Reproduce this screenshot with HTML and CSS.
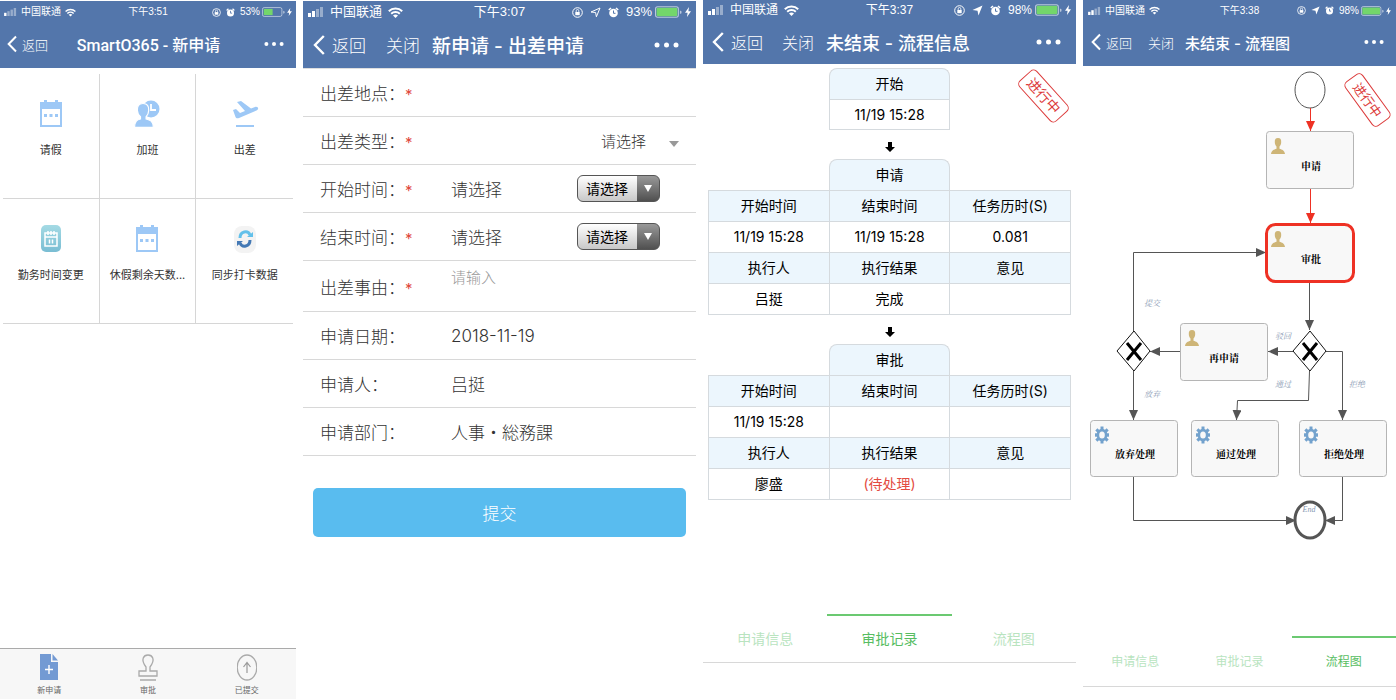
FILE: index.html
```html
<!DOCTYPE html>
<html lang="zh-CN">
<head>
<meta charset="utf-8">
<title>SmartO365</title>
<link rel="stylesheet" href="styles.css">
</head>
<body>
<svg class="sprite" aria-hidden="true">
  <symbol id="signal-1" viewBox="0 0 16 10"><rect x="0" y="6" width="3" height="4"/><g opacity=".4"><rect x="4" y="4" width="3" height="6"/><rect x="8" y="2" width="3" height="8"/><rect x="12" y="0" width="3" height="10"/></g></symbol>
  <symbol id="signal-2" viewBox="0 0 16 10"><rect x="0" y="6" width="3" height="4"/><rect x="4" y="4" width="3" height="6"/><g opacity=".4"><rect x="8" y="2" width="3" height="8"/><rect x="12" y="0" width="3" height="10"/></g></symbol>
  <symbol id="wifi" viewBox="0 0 15 11"><path fill="none" stroke="currentColor" stroke-width="2" d="M.8 4.2a9.6 9.6 0 0 1 13.4 0M3.2 6.8a6.2 6.2 0 0 1 8.6 0"/><path d="M5 8.6a3.6 3.6 0 0 1 5 0L7.500 11z"/></symbol>
  <symbol id="lock" viewBox="0 0 11 11"><circle cx="5.500" cy="5.500" r="4.800" fill="none" stroke="currentColor"/><rect x="3.300" y="5" width="4.400" height="3.200"/><path fill="none" stroke="currentColor" stroke-width=".8" d="M4.200 5V3.800a1.300 1.300 0 0 1 2.600 0V5"/></symbol>
  <symbol id="loc-line" viewBox="0 0 11 11"><path fill="none" stroke="currentColor" d="M10 1L6.400 9.800 5.600 5.500 1 5z"/></symbol>
  <symbol id="loc-fill" viewBox="0 0 11 11"><path d="M10.500.5L6.500 10.500 5.500 5.700.5 5z"/></symbol>
  <symbol id="alarm" viewBox="0 0 11 11"><circle cx="5.500" cy="6" r="4.300"/><path fill="none" stroke="currentColor" stroke-width="1.600" d="M.8 3L3 1M10.200 3L8 1"/><path class="cut" d="M5.500 3.500V6.300H7.500"/></symbol>
  <symbol id="bat-half" viewBox="0 0 26 11"><rect x=".5" y=".5" width="22" height="10" rx="2" fill="none" stroke="currentColor" opacity=".6"/><rect x="2" y="2" width="10" height="7" fill="#73d66b"/><path d="M24 4v3.500l1.500-.8V4.800z" opacity=".6"/></symbol>
  <symbol id="bat-full" viewBox="0 0 26 11"><rect x=".5" y=".5" width="22" height="10" rx="2" fill="none" stroke="currentColor" opacity=".6"/><rect x="1.500" y="1.500" width="20" height="8" rx="1" fill="#73d66b"/><path d="M24 4v3.500l1.500-.8V4.800z" opacity=".6"/></symbol>
  <symbol id="bolt" viewBox="0 0 6 10"><path d="M4 0L0 5.800H2.600L2 10 6 4.200H3.400z"/></symbol>
  <symbol id="back" viewBox="0 0 12 20"><path fill="none" stroke="currentColor" stroke-width="2.400" d="M10.800 1L2 10l8.800 9"/></symbol>
  <symbol id="dots" viewBox="0 0 25 6"><circle cx="3" cy="3" r="2.500"/><circle cx="12.500" cy="3" r="2.500"/><circle cx="22" cy="3" r="2.500"/></symbol>
  <symbol id="calendar" viewBox="0 0 24 28"><path fill-rule="evenodd" d="M1 2h4V0h3v2h8V0h3v2h4v25H1zM3 9v16h18V9z"/><rect x="5" y="14" width="3" height="3"/><rect x="10.500" y="14" width="3" height="3"/><rect x="16" y="14" width="3" height="3"/></symbol>
  <symbol id="person" viewBox="0 0 14 16"><path d="M7 0c2.400 0 3.400 1.600 3.200 4.200-.1 2-.8 3.400-1.700 4.300v2.300c2.500.8 5 1.700 5.500 5.200H0c.5-3.500 3-4.400 5.500-5.200V8.500C4.600 7.600 3.900 6.200 3.800 4.200 3.600 1.600 4.600 0 7 0z"/></symbol>
  <symbol id="gear" viewBox="-8 -9 16 18"><g><rect x="-1.500" y="-8.500" width="3" height="17"/><rect x="-7" y="-1.700" width="14" height="3.400"/><rect x="-1.500" y="-8" width="3" height="16" transform="rotate(45)"/><rect x="-1.500" y="-8" width="3" height="16" transform="rotate(-45)"/><ellipse rx="5.300" ry="6.300"/></g><ellipse rx="2.800" ry="3.500" fill="#f8f8f8"/></symbol>
</svg>

<main class="board">
  <section class="screen screen-apps">
    <header class="head">
      <div class="status">
        <div class="status-left"><svg class="i-signal"><use href="#signal-1"/></svg><span>中国联通</span><svg class="i-wifi"><use href="#wifi"/></svg></div>
        <time>下午3:51</time>
        <div class="status-right"><svg class="i-round"><use href="#lock"/></svg><svg class="i-round"><use href="#alarm"/></svg><span>53%</span><svg class="i-bat"><use href="#bat-half"/></svg><svg class="i-bolt"><use href="#bolt"/></svg></div>
      </div>
      <nav class="nav nav-centered">
        <button class="back" type="button"><svg class="i-back"><use href="#back"/></svg>返回</button>
        <h1>SmartO365 - 新申请</h1>
        <button class="more" type="button" aria-label="更多"><svg class="i-dots"><use href="#dots"/></svg></button>
      </nav>
    </header>
    <div class="apps">
      <a class="app" href="#leave"><svg class="app-icon"><use href="#calendar" x="2" width="24" height="28"/></svg>请假</a>
      <a class="app" href="#overtime"><svg class="app-icon" viewBox="0 0 28 28"><circle cx="18" cy="9" r="8.500"/><path fill="none" stroke="#fff" stroke-width="1.800" d="M18 4v6h5"/><path stroke="#fff" stroke-width="1.200" d="M10 3.500c4.300 0 6 2.600 5.700 7-.2 3-1.200 5-2.600 6.300v2.200c4 .9 7 2 7.300 8.400H1.500c.3-6.400 2.500-7.500 6-8.400v-2.200C5.800 15.500 4.600 13.500 4.400 10.500 4.100 6.100 5.700 3.500 10 3.500z"/></svg>加班</a>
      <a class="app" href="#trip"><svg class="app-icon" viewBox="0 0 28 28"><path d="M2 10l3-1 4 4 5-2L6 2l4-1 10 7.500 4-1.500c3-1 4.500 2 1.500 3.500L8 18c-2 .8-3 0-3.500-1z"/><rect x="5" y="25" width="18" height="2"/></svg>出差</a>
      <a class="app" href="#shift"><svg class="app-icon" viewBox="0 0 28 28"><defs><linearGradient id="teal" x2="0" y2="1"><stop stop-color="#a4dae4"/><stop offset="1" stop-color="#79bdd3"/></linearGradient></defs><rect x="4" y="0" width="20" height="27" rx="5" fill="url(#teal)"/><path fill="none" stroke="#fff" stroke-width="1.500" d="M8 8h12v13H8zM8 12h12M11 6v4M14 6v4M17 6v4M12.500 14.500v4M15.500 14.500v4"/></svg>勤务时间变更</a>
      <a class="app" href="#balance"><svg class="app-icon"><use href="#calendar" x="2" width="24" height="28"/></svg>休假剩余天数...</a>
      <a class="app" href="#sync"><svg class="app-icon" viewBox="0 0 28 28"><rect x="3" y="1" width="22" height="27" rx="8" fill="#f3f3f3"/><path fill="none" stroke="#62c0ea" stroke-width="3" d="M9 13c0-7 8-8 10-3"/><path fill="#62c0ea" d="M16 12h6V7z"/><path fill="none" stroke="#4479b5" stroke-width="3" d="M19 15c0 7-8 8-10 3"/><path fill="#4479b5" d="M12 16H6v5z"/></svg>同步打卡数据</a>
    </div>
    <nav class="dock">
      <a href="#new"><svg class="dock-icon" viewBox="0 0 20 28"><path fill="#739ad3" d="M1 1h11v8h7v18H1z"/><path fill="#739ad3" d="M13.500 1L19 7.500h-5.500z"/><path stroke="#fff" stroke-width="1.400" d="M10 12v9M6 16.500h8"/></svg>新申请</a>
      <a href="#approve"><svg class="dock-icon" viewBox="0 0 20 28"><path fill="none" stroke="#aaa" stroke-width="1.300" d="M8 18v-4C2 6 6 2 10 2s8 4 2 12v4h7v5H1v-5zM2 27h16"/></svg>审批</a>
      <a href="#sent"><svg class="dock-icon" viewBox="0 0 20 28"><ellipse cx="10" cy="14.500" rx="9.800" ry="12.500" fill="none" stroke="#aaa" stroke-width="1.300"/><path fill="none" stroke="#999" stroke-width="1.200" d="M10 20V9.500M6.500 14L10 9.500l3.500 4.500"/></svg>已提交</a>
    </nav>
  </section>

  <section class="screen screen-form">
    <header class="head">
      <div class="status">
        <div class="status-left"><svg class="i-signal"><use href="#signal-2"/></svg><span>中国联通</span><svg class="i-wifi"><use href="#wifi"/></svg></div>
        <time>下午3:07</time>
        <div class="status-right"><svg class="i-round"><use href="#lock"/></svg><svg class="i-round"><use href="#loc-line"/></svg><svg class="i-round"><use href="#alarm"/></svg><span>93%</span><svg class="i-bat"><use href="#bat-full"/></svg><svg class="i-bolt"><use href="#bolt"/></svg></div>
      </div>
      <nav class="nav">
        <button class="back" type="button"><svg class="i-back"><use href="#back"/></svg>返回</button>
        <button class="close" type="button">关闭</button>
        <h1>新申请 - 出差申请</h1>
        <button class="more" type="button" aria-label="更多"><svg class="i-dots"><use href="#dots"/></svg></button>
      </nav>
    </header>
    <form class="form">
      <div class="row"><label for="place">出差地点：<b>*</b></label><input id="place" class="text" type="text"></div>
      <div class="row"><label for="kind">出差类型：<b>*</b></label><span class="plain-select"><select id="kind"><option>请选择</option></select></span></div>
      <div class="row"><label for="start">开始时间：<b>*</b></label><span class="value">请选择</span><span class="gloss-select"><select id="start"><option>请选择</option></select></span></div>
      <div class="row"><label for="end">结束时间：<b>*</b></label><span class="value">请选择</span><span class="gloss-select"><select id="end"><option>请选择</option></select></span></div>
      <div class="row row-tall"><label for="reason">出差事由：<b>*</b></label><textarea id="reason" class="text" rows="1" placeholder="请输入"></textarea></div>
      <div class="row"><span class="label">申请日期：</span><span class="value">2018-11-19</span></div>
      <div class="row"><span class="label">申请人：</span><span class="value">吕挺</span></div>
      <div class="row"><span class="label">申请部门：</span><span class="value value-ja" lang="ja">人事・総務課</span></div>
      <button class="submit" type="submit">提交</button>
    </form>
  </section>

  <section class="screen screen-log">
    <header class="head">
      <div class="status">
        <div class="status-left"><svg class="i-signal"><use href="#signal-2"/></svg><span>中国联通</span><svg class="i-wifi"><use href="#wifi"/></svg></div>
        <time>下午3:37</time>
        <div class="status-right"><svg class="i-round"><use href="#lock"/></svg><svg class="i-round"><use href="#loc-fill"/></svg><svg class="i-round"><use href="#alarm"/></svg><span>98%</span><svg class="i-bat"><use href="#bat-full"/></svg><svg class="i-bolt"><use href="#bolt"/></svg></div>
      </div>
      <nav class="nav">
        <button class="back" type="button"><svg class="i-back"><use href="#back"/></svg>返回</button>
        <button class="close" type="button">关闭</button>
        <h1>未结束 - 流程信息</h1>
        <button class="more" type="button" aria-label="更多"><svg class="i-dots"><use href="#dots"/></svg></button>
      </nav>
    </header>
    <div class="log">
      <span class="stamp">进行中</span>
      <h2 class="step">开始</h2>
      <p class="step-time">11/19 15:28</p>
      <svg class="down" viewBox="0 0 10 10"><path d="M3 0h4v5h3l-5 5-5-5h3z"/></svg>
      <h2 class="step">申请</h2>
      <table>
        <tr><th>开始时间</th><th>结束时间</th><th>任务历时(S)</th></tr>
        <tr><td>11/19 15:28</td><td>11/19 15:28</td><td>0.081</td></tr>
        <tr><th>执行人</th><th>执行结果</th><th>意见</th></tr>
        <tr><td>吕挺</td><td>完成</td><td></td></tr>
      </table>
      <svg class="down" viewBox="0 0 10 10"><path d="M3 0h4v5h3l-5 5-5-5h3z"/></svg>
      <h2 class="step">审批</h2>
      <table>
        <tr><th>开始时间</th><th>结束时间</th><th>任务历时(S)</th></tr>
        <tr><td>11/19 15:28</td><td></td><td></td></tr>
        <tr><th>执行人</th><th>执行结果</th><th>意见</th></tr>
        <tr><td>廖盛</td><td class="pending">(待处理)</td><td></td></tr>
      </table>
    </div>
    <nav class="tabs"><a href="#info">申请信息</a><a class="active" href="#log">审批记录</a><a href="#flow">流程图</a></nav>
  </section>

  <section class="screen screen-flow">
    <header class="head">
      <div class="status">
        <div class="status-left"><svg class="i-signal"><use href="#signal-2"/></svg><span>中国联通</span><svg class="i-wifi"><use href="#wifi"/></svg></div>
        <time>下午3:38</time>
        <div class="status-right"><svg class="i-round"><use href="#lock"/></svg><svg class="i-round"><use href="#loc-fill"/></svg><svg class="i-round"><use href="#alarm"/></svg><span>98%</span><svg class="i-bat"><use href="#bat-full"/></svg><svg class="i-bolt"><use href="#bolt"/></svg></div>
      </div>
      <nav class="nav">
        <button class="back" type="button"><svg class="i-back"><use href="#back"/></svg>返回</button>
        <button class="close" type="button">关闭</button>
        <h1>未结束 - 流程图</h1>
        <button class="more" type="button" aria-label="更多"><svg class="i-dots"><use href="#dots"/></svg></button>
      </nav>
    </header>
    <div class="flow">
      <span class="stamp">进行中</span>
      <svg class="diagram" viewBox="0 0 313 480" role="img" aria-label="流程图">
        <defs>
          <marker id="tip" viewBox="0 0 10 9" refX="10" refY="4.500" markerWidth="10" markerHeight="9" markerUnits="userSpaceOnUse" orient="auto"><path d="M0 0l10 4.500-10 4.500z" fill="#555"/></marker>
          <marker id="tip-red" viewBox="0 0 10 9" refX="10" refY="4.500" markerWidth="10" markerHeight="9" markerUnits="userSpaceOnUse" orient="auto"><path d="M0 0l10 4.500-10 4.500z" fill="#ee3124"/></marker>
        </defs>
        <ellipse class="start" cx="227" cy="24" rx="15" ry="18"/>
        <path class="edge edge-red" d="M227.500 42V65"/>
        <path class="edge edge-red" d="M227.500 122V157"/>
        <path class="edge" d="M226.500 217V264"/>
        <path class="edge" d="M211 285.500H185"/>
        <path class="edge" d="M97 285.500H67"/>
        <path class="edge" d="M50.500 266V186.500H183"/>
        <path class="edge" d="M50.500 305V354"/>
        <path class="edge" d="M226.500 305L225.500 334.500H154.500L153.500 354"/>
        <path class="edge" d="M243 285.500H259.500V354"/>
        <path class="edge" d="M50.500 411V454.500H213"/>
        <path class="edge" d="M259.500 411V454.500H242"/>
        <rect class="task" x="183.500" y="65.500" width="87" height="57" rx="3"/>
        <rect class="task task-current" x="183.500" y="158.500" width="87" height="57" rx="9"/>
        <rect class="task" x="97.500" y="257.500" width="87" height="57" rx="3"/>
        <rect class="task" x="7.500" y="354.500" width="87" height="56" rx="3"/>
        <rect class="task" x="108.500" y="354.500" width="87" height="56" rx="3"/>
        <rect class="task" x="216.500" y="354.500" width="87" height="56" rx="3"/>
        <g fill="#ceb577"><use href="#person" x="188" y="72" width="14" height="16"/><use href="#person" x="188" y="165" width="14" height="16"/><use href="#person" x="102" y="264" width="14" height="16"/></g>
        <g fill="#73a2cd"><use href="#gear" x="11" y="360" width="16" height="18"/><use href="#gear" x="112" y="360" width="16" height="18"/><use href="#gear" x="220" y="360" width="16" height="18"/></g>
        <path class="gate" d="M227 265l16 20-16 20-17-20zM51 265l16 20-16 20-17-20z"/>
        <path class="cross" d="M220 277l14 17M234 277l-14 17M44 277l14 17M58 277l-14 17"/>
        <ellipse class="end" cx="227" cy="454" rx="15" ry="18"/>
        <g class="task-name"><text x="228" y="104">申请</text><text x="228" y="197">审批</text><text x="141" y="296">再申请</text><text x="52" y="392">放弃处理</text><text x="153" y="392">通过处理</text><text x="261" y="392">拒绝处理</text></g>
        <g class="edge-name"><text x="69" y="240">提交</text><text x="200" y="273">驳回</text><text x="200" y="321">通过</text><text x="274" y="321">拒绝</text><text x="69" y="331">放弃</text><text x="226" y="446">End</text></g>
      </svg>
    </div>
    <nav class="tabs"><a href="#info">申请信息</a><a href="#log">审批记录</a><a class="active" href="#flow">流程图</a></nav>
  </section>
</main>
</body>
</html>
```

FILE: styles.css
```css
* { box-sizing: border-box; }
body { margin: 0; background: #fff; color: #333; font-family: Inter, "Noto Sans CJK SC", sans-serif; }
h1, h2, p { margin: 0; font-weight: 400; }
a { color: inherit; text-decoration: none; }
button, input, textarea, select { margin: 0; padding: 0; border: 0; background: none; color: inherit; font: inherit; appearance: none; }
svg { display: block; flex: none; fill: currentColor; }
.sprite { position: absolute; width: 0; height: 0; }

.board { display: grid; grid-template-columns: 296fr 393fr 373fr 313fr; column-gap: 7px; min-height: 100vh; }
.screen { display: flex; flex-direction: column; min-width: 0; }

/* header */
.head { background: #5376ab; color: #fff; }
.status { display: grid; grid-template-columns: 1fr auto 1fr; align-items: center; height: 22px; padding: 0 5px; font-size: 13px; line-height: 20px; white-space: nowrap; font-family: "Liberation Sans", "Noto Sans CJK SC", sans-serif; }
.status-left { display: flex; align-items: center; gap: 6px; }
.status-right { display: flex; align-items: center; justify-content: flex-end; gap: 7px; }
.i-signal { width: 16px; height: 10px; }
.i-wifi { width: 15px; height: 11px; }
.i-round { width: 11px; height: 11px; }
.i-bat { width: 27px; height: 12px; margin: 0 -4px; }
.i-bolt { width: 6px; height: 10px; }
.cut { fill: none; stroke: #5376ab; }
.nav { display: flex; align-items: center; height: 45px; padding: 0 17px 2px 10px; font-size: 17px; }
.back { display: flex; align-items: center; gap: 7px; margin-right: 20px; }
.close { margin-right: 12px; }
.i-back { width: 12px; height: 20px; }
.i-dots { width: 25px; height: 6px; }
.more { margin-left: auto; }
.nav h1 { font-size: 19px; font-weight: 500; white-space: nowrap; }
.nav button { white-space: nowrap; font-weight: 300; }

.screen-apps .status, .screen-flow .status { font-size: 10px; padding: 0 4px; }
.screen-apps .status-left, .screen-flow .status-left { gap: 4px; }
.screen-apps .status-right, .screen-flow .status-right { gap: 5px; }
.screen-apps .i-signal, .screen-flow .i-signal { width: 13px; height: 8px; }
.screen-apps .i-wifi, .screen-flow .i-wifi { width: 11px; height: 9px; }
.screen-apps .i-round, .screen-flow .i-round { width: 9px; height: 9px; }
.screen-apps .i-bat, .screen-flow .i-bat { width: 23px; height: 10px; margin: 0 -3px; }
.screen-apps .i-bolt, .screen-flow .i-bolt { width: 5px; height: 8px; }
.screen-apps .nav, .screen-flow .nav { padding: 0 12px 3px 7px; font-size: 13px; }
.screen-apps .back, .screen-flow .back { gap: 5px; margin-right: 16px; }
.screen-apps .i-back, .screen-flow .i-back { width: 10px; height: 20px; }
.screen-apps .i-dots, .screen-flow .i-dots { width: 20px; height: 6px; }
.screen-apps, .screen-form { padding-top: 1px; }

/* app grid */
.nav.nav-centered { display: grid; grid-template-columns: 1fr auto 1fr; }
.screen-apps .nav h1 { padding-left: 6px; font-size: 16px; font-family: Roboto, "Noto Sans CJK SC", sans-serif; }
.screen-apps .more { justify-self: end; }
.screen-apps .back { margin-right: 0; }
.apps { display: grid; grid-template-columns: repeat(3, 1fr); margin: 6px 3px 0; }
.app { display: flex; flex-direction: column; align-items: center; gap: 13px; height: 125px; padding-top: 26px; border-right: 1px solid #d6d6d6; border-bottom: 1px solid #d6d6d6; font-size: 11px; line-height: 18px; white-space: nowrap; }
.app:nth-child(3n) { border-right: 0; }
.app-icon { width: 28px; height: 28px; color: #9dc8f6; }
.dock { display: grid; grid-template-columns: repeat(3, 1fr); height: 51px; margin: auto 0 1px; padding-top: 4px; border-top: 1px solid #aaa; background: #f7f7f7; color: #666; font-size: 8px; line-height: 16px; text-align: center; }
.dock a { display: flex; flex-direction: column; align-items: center; gap: 1px; }
.dock-icon { width: 20px; height: 28px; }

/* request form */
.form { display: flex; flex-direction: column; border-top: 1px solid #dedede; font-size: 17px; font-weight: 300; }
.row { display: flex; align-items: center; height: 48px; padding: 0 17px; border-bottom: 1px solid #d8d8d8; }
.row label, .label { flex: none; width: 131px; white-space: nowrap; }
.row b { color: #e0483c; font-weight: 400; font-size: 15px; }
.value-ja { font-family: "Noto Sans CJK JP", sans-serif; }
.row-tall { height: 51px; }
.text { flex: 1; min-width: 0; }
textarea.text { height: 36px; line-height: 20px; font-size: 15px; resize: none; outline: 0; overflow: hidden; }
textarea::placeholder { color: #999; opacity: 1; }
.plain-select { position: relative; margin-left: auto; }
.plain-select select { width: 78px; font-size: 15px; }
.plain-select::after { content: ""; position: absolute; right: 0; top: 10px; border: 5px solid transparent; border-top: 6px solid #999; border-bottom: 0; }
.gloss-select { position: relative; margin-left: auto; margin-right: 19px; }
.gloss-select select { display: block; width: 83px; height: 27px; padding-left: 8px; border: 1px solid #555; border-radius: 6px; background: linear-gradient(#999, #505050) right / 22px 100% no-repeat, linear-gradient(#fff, #c8c8c8); color: #000; font-size: 14px; font-weight: 400; }
.gloss-select::after { content: ""; position: absolute; right: 8px; top: 10px; border: 4px solid transparent; border-top: 7px solid #fff; border-bottom: 0; }
.submit { height: 49px; margin: 32px 10px 0; border-radius: 5px; background: #59bcef; color: #fff; font-size: 17px; }

/* approval log */
.screen-log .status { height: 20px; font-size: 12px; }
.screen-log .nav { height: 44px; padding: 0 15px 1px 9px; font-size: 16px; }
.screen-log .nav h1 { font-size: 18px; }
.screen-log .back { margin-right: 19px; }
.log { position: relative; display: flex; flex-direction: column; align-items: center; padding: 4px 5px 0; color: #000; font-size: 14px; text-align: center; }
.step { width: 33.4%; height: 31px; border: 1px solid #d5dade; border-bottom: 0; border-radius: 8px 8px 0 0; background: #ecf6fd; font-size: 14px; line-height: 30px; }
.step-time { width: 33.4%; height: 31px; border: 1px solid #d5dade; line-height: 30px; }
.down { width: 10px; height: 10px; margin: 12px 0 7px; }
.log table { width: 100%; border-collapse: collapse; table-layout: fixed; }
.log th, .log td { height: 31px; padding: 0; border: 1px solid #d5dade; font-weight: 400; line-height: 20px; }
.log th { background: #ecf6fd; }
.log .pending { color: #e34b41; }
.stamp { position: absolute; top: 20px; right: 5px; width: 55px; height: 24px; border: 1px solid #dc3a3a; border-radius: 5px; color: #dc3a3a; font-size: 14px; line-height: 22px; text-align: center; transform: rotate(48deg); }

.tabs { display: grid; grid-template-columns: repeat(3, 1fr); margin: auto 0 37px; border-bottom: 1px solid #d8d8d8; color: #b9e4bf; font-size: 14px; line-height: 46px; text-align: center; }
.tabs a { border-top: 2px solid transparent; }
.tabs .active { border-color: #6bc971; color: #57bd62; }

/* flow chart */
.screen-flow .status { height: 21px; padding: 0 5px; }
.screen-flow .nav { height: 45px; padding-left: 8px; }
.screen-flow .nav h1 { font-size: 15px; }
.screen-flow .close { margin-right: 11px; }
.flow { position: relative; }
.flow .stamp { top: 23px; right: 1px; width: 55px; height: 22px; font-size: 13px; line-height: 20px; transform: rotate(54deg); }
.diagram { width: 100%; }
.start { fill: #fff; stroke: #555; }
.end { fill: none; stroke: #555; stroke-width: 3; }
.edge { fill: none; stroke: #555; marker-end: url(#tip); }
.edge-red { stroke: #ee3124; marker-end: url(#tip-red); }
.task { fill: #f8f8f8; stroke: #b5b5b5; }
.task-current { stroke: #ee3124; stroke-width: 3; }
.gate { fill: #fff; stroke: #111; }
.cross { stroke: #000; stroke-width: 3; }
.task-name { fill: #000; font-size: 10px; font-weight: 700; text-anchor: middle; font-family: "Liberation Serif", "Noto Serif CJK SC", "Noto Sans CJK SC", serif; }
.edge-name { fill: #8798b2; font-size: 8px; font-style: italic; text-anchor: middle; font-family: "Liberation Serif", "Noto Serif CJK SC", "Noto Sans CJK SC", serif; }
.screen-flow .tabs { margin-bottom: 13px; font-size: 12px; line-height: 48px; }
```
